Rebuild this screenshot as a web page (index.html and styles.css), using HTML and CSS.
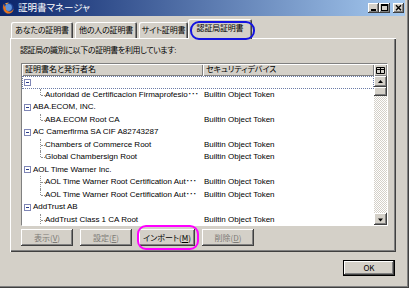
FILE: index.html
```html
<!DOCTYPE html>
<html lang="ja">
<head>
<meta charset="utf-8">
<title>証明書マネージャ</title>
<link rel="stylesheet" href="styles.css">
</head>
<body>
<div class="window">
  <div class="titlebar">
    <svg class="appicon" width="12" height="12" viewBox="0 0 16 16">
      <circle cx="8" cy="8" r="7.5" fill="#1d3f8f"/>
      <circle cx="8.6" cy="7.4" r="4.6" fill="#5d93db"/>
      <path d="M2.6 2.4C0.6 5.5 1 11.6 5.6 14.5C9.8 16.8 15.4 13.8 15.6 8.6C14.6 11.6 11.8 13.4 8.8 12.8C5.8 12.2 4.2 9.6 5.2 6.8C3.8 6.8 2.6 5 2.6 2.4Z" fill="#e8741a"/>
      <path d="M4.2 1.6C6 0.8 8 0.6 9.6 1.2C7.8 1.6 6.6 2.6 6 3.8C5.2 3 4.6 2.4 4.2 1.6Z" fill="#f4a23a"/>
    </svg>
    <span class="title">証明書マネージャ</span>
    <div class="controls">
      <span class="cbtn"><svg width="11" height="10" viewBox="0 0 11 10"><rect x="3" y="6" width="5" height="2" fill="#000"/></svg></span>
      <span class="cbtn"><svg width="11" height="10" viewBox="0 0 11 10"><path d="M2 1h7v7H2z M3 3v4h5V3z" fill="#000" fill-rule="evenodd"/></svg></span>
      <span class="cbtn close"><svg width="11" height="10" viewBox="0 0 11 10"><path d="M3 2.2l5 5M8 2.2l-5 5" stroke="#000" stroke-width="1.4"/></svg></span>
    </div>
  </div>

  <div class="content">
    <div class="tabs">
      <div class="tab t1">あなたの証明書</div>
      <div class="tab t2">他の人の証明書</div>
      <div class="tab t3">サイト証明書</div>
      <div class="tab t4 selected">認証局証明書</div>
    </div>

    <div class="panel">
      <div class="label">認証局の識別に以下の証明書を利用しています:</div>
      <div class="tree">
        <div class="tree-main">
          <div class="thead">
            <div class="th c1">証明書名と発行者名</div>
            <div class="th c2">セキュリティデバイス</div>
          </div>
          <div class="rows">
            <div class="row group focus"><div class="cell1"><span class="twisty"></span><span class="name"></span></div></div>
            <div class="row child last"><div class="cell1"><span class="branch"></span><span class="name">Autoridad de Certificacion Firmaprofesio<span class="ell">･･･</span></span></div><div class="cell2">Builtin Object Token</div></div>
            <div class="row group"><div class="cell1"><span class="twisty"></span><span class="name">ABA.ECOM, INC.</span></div></div>
            <div class="row child last"><div class="cell1"><span class="branch"></span><span class="name">ABA.ECOM Root CA</span></div><div class="cell2">Builtin Object Token</div></div>
            <div class="row group"><div class="cell1"><span class="twisty"></span><span class="name">AC Camerfirma SA CIF A82743287</span></div></div>
            <div class="row child"><div class="cell1"><span class="branch"></span><span class="name">Chambers of Commerce Root</span></div><div class="cell2">Builtin Object Token</div></div>
            <div class="row child last"><div class="cell1"><span class="branch"></span><span class="name">Global Chambersign Root</span></div><div class="cell2">Builtin Object Token</div></div>
            <div class="row group"><div class="cell1"><span class="twisty"></span><span class="name">AOL Time Warner Inc.</span></div></div>
            <div class="row child"><div class="cell1"><span class="branch"></span><span class="name">AOL Time Warner Root Certification Aut<span class="ell">･･･</span></span></div><div class="cell2">Builtin Object Token</div></div>
            <div class="row child last"><div class="cell1"><span class="branch"></span><span class="name">AOL Time Warner Root Certification Aut<span class="ell">･･･</span></span></div><div class="cell2">Builtin Object Token</div></div>
            <div class="row group"><div class="cell1"><span class="twisty"></span><span class="name">AddTrust AB</span></div></div>
            <div class="row child"><div class="cell1"><span class="branch"></span><span class="name">AddTrust Class 1 CA Root</span></div><div class="cell2">Builtin Object Token</div></div>
            <div class="row child"><div class="cell1"><span class="branch"></span><span class="name">AddTrust External CA Root</span></div><div class="cell2">Builtin Object Token</div></div>
          </div>
        </div>
        <div class="vscroll">
          <div class="picker"><svg width="9" height="7" viewBox="0 0 9 7"><path d="M0.5 0.5h8v6h-8z M0.5 2.5h8 M4.5 0.5v6" fill="none" stroke="#000" stroke-width="1"/></svg></div>
          <div class="sbtn"><svg width="11" height="9" viewBox="0 0 11 9"><path d="M3 6h5L5.5 3z" fill="#000"/></svg></div>
          <div class="thumb"></div>
          <div class="track"></div>
          <div class="sbtn down"><svg width="11" height="9" viewBox="0 0 11 9"><path d="M3 3.5h5L5.5 6.5z" fill="#000"/></svg></div>
        </div>
      </div>
      <div class="buttons">
        <div class="btn disabled"><span class="btxt">表示(<u>V</u>)</span></div>
        <div class="btn disabled"><span class="btxt">設定(<u>E</u>)</span></div>
        <div class="btn import"><span class="btxt">インポート(<u>M</u>)</span></div>
        <div class="btn disabled"><span class="btxt">削除(<u>D</u>)</span></div>
      </div>
    </div>

    <div class="footer">
      <div class="btn ok"><span class="btxt">OK</span></div>
    </div>
  </div>

  <div class="mark mark-tab"></div>
  <div class="mark mark-import"></div>
</div>
</body>
</html>
```

FILE: styles.css
```css
* {
  box-sizing: border-box;
  margin: 0;
  padding: 0;
}

html, body {
  width: 409px;
  height: 288px;
  overflow: hidden;
}

body {
  background: #d4d0c8;
  font-family: "Liberation Sans", "Noto Sans CJK JP", sans-serif;
  font-size: 8px;
  font-feature-settings: "palt";
  color: #000;
}

.window {
  position: relative;
  width: 409px;
  height: 288px;
  background: #d4d0c8;
  box-shadow: inset -1px -1px #404040, inset -2px -2px #808080;
}

/* title bar */
.titlebar {
  display: flex;
  align-items: center;
  height: 16px;
  margin-right: 4px;
  padding: 0 1px 0 2px;
  background: linear-gradient(to right, #0a246a, #a6caf0);
}

.appicon {
  flex: none;
}

.title {
  margin-left: 4px;
  color: #fff;
  font-size: 9.5px;
  line-height: 16px;
}

.controls {
  display: flex;
  margin-left: auto;
}

.cbtn {
  display: flex;
  width: 11px;
  height: 10px;
  background: #d4d0c8;
  box-shadow: inset -1px -1px #404040, inset 1px 1px #fff, inset -2px -2px #808080;
}

.cbtn.close {
  margin-left: 3px;
}

/* content */
.content {
  padding: 3px 13px 0 10px;
}

.tabs {
  position: relative;
  z-index: 1;
  display: flex;
  align-items: flex-end;
  height: 19px;
  padding-left: 1px;
}

.tab {
  height: 16px;
  margin-right: 2px;
  padding-top: 3px;
  line-height: 12px;
  text-align: center;
  white-space: nowrap;
  letter-spacing: -0.2px;
  background: #d4d0c8;
  border-radius: 2px 2px 0 0;
  box-shadow: inset 1px 1px #fff, inset -1px 0 #404040, inset -2px 0 #808080;
}

.t1 { width: 62px; }
.t2 { width: 62px; }
.t3 { width: 49px; }
.t4 { width: 60px; }

.tab.selected {
  width: 64px;
  height: 20px;
  margin: 0 -2px -1px -2px;
  padding-top: 4px;
}

.panel {
  height: 214px;
  padding: 8px 8px 0 11px;
  box-shadow: inset 1px 1px #fff, inset -1px -1px #404040, inset -2px -2px #808080;
}

.label {
  margin-left: -1px;
  line-height: 10px;
  white-space: nowrap;
  letter-spacing: -0.4px;
}

/* tree */
.tree {
  display: flex;
  height: 163px;
  margin-top: 7px;
  background: #fff;
  border: 1px solid;
  border-color: #808080 #fff #fff #808080;
  overflow: hidden;
}

.tree-main {
  flex: 1;
  min-width: 0;
  display: flex;
  flex-direction: column;
}

.thead {
  display: flex;
  height: 12px;
  flex: none;
}

.th {
  padding-left: 3px;
  line-height: 12px;
  white-space: nowrap;
  background: #d4d0c8;
  box-shadow: inset 1px 1px #fff, inset -1px -1px #808080;
}

.th.c1 {
  width: 181px;
}

.th.c2 {
  flex: 1;
}

.rows {
  flex: 1;
  overflow: hidden;
}

.row {
  display: flex;
  height: 12.5px;
  line-height: 12.5px;
  white-space: nowrap;
}

.row.focus {
  outline: 1px dotted #6b7ca8;
  outline-offset: -1px;
}

.cell1 {
  display: flex;
  align-items: center;
  width: 181px;
  flex: none;
  overflow: hidden;
}

.group .cell1 {
  padding-left: 2px;
}

.child .cell1 {
  padding-left: 18px;
}

.cell2 {
  padding-left: 1px;
}

.twisty {
  position: relative;
  flex: none;
  width: 7px;
  height: 7px;
  margin-right: 2px;
  background: #fff;
  border: 1px solid #7f86b6;
}

.twisty::after {
  content: "";
  position: absolute;
  left: 1px;
  top: 2px;
  width: 3px;
  height: 1px;
  background: #283a8a;
}

.branch {
  position: relative;
  flex: none;
  align-self: stretch;
  width: 5px;
}

.branch::before {
  content: "";
  position: absolute;
  left: 0;
  top: 0;
  height: 100%;
  border-left: 1px dotted #909090;
}

.last .branch::before {
  height: 50%;
}

.branch::after {
  content: "";
  position: absolute;
  left: 1px;
  top: 50%;
  width: 4px;
  border-top: 1px dotted #909090;
}

.ell {
  letter-spacing: -0.5px;
}

/* scrollbar */
.vscroll {
  display: flex;
  flex-direction: column;
  width: 13px;
  flex: none;
}

.picker {
  display: flex;
  align-items: center;
  justify-content: center;
  height: 12px;
  background: #d4d0c8;
  box-shadow: inset 1px 1px #fff, inset -1px -1px #808080;
}

.sbtn {
  display: flex;
  align-items: center;
  justify-content: center;
  height: 11px;
  background: #d4d0c8;
  box-shadow: inset -1px -1px #404040, inset 1px 1px #fff, inset -2px -2px #808080;
}

.sbtn.down {
  height: 12px;
}

.thumb {
  height: 9px;
  background: #d4d0c8;
  box-shadow: inset -1px -1px #404040, inset 1px 1px #fff, inset -2px -2px #808080;
}

.track {
  flex: 1;
  background: repeating-conic-gradient(#fff 0 25%, #d4d0c8 0 50%) 0 0 / 2px 2px;
}

/* buttons */
.buttons {
  display: flex;
  gap: 7px;
  margin-top: 3px;
}

.btn {
  display: flex;
  align-items: center;
  justify-content: center;
  width: 52px;
  height: 17px;
  white-space: nowrap;
  color: #000;
  background: #d4d0c8;
  box-shadow: inset -1px -1px #404040, inset 1px 1px #fff, inset -2px -2px #808080;
}

.btxt {
  font-family: "Noto Sans CJK JP", sans-serif;
  line-height: 10px;
}

.btn.import {
  width: 56px;
}

.btn.disabled {
  color: #7c7a76;
}

.footer {
  display: flex;
  justify-content: flex-end;
  margin-top: 8px;
  padding-right: 1px;
}

.btn.ok {
  height: 16px;
  box-shadow: inset 0 0 0 1px #000, inset -2px -2px #404040, inset 2px 2px #fff, inset -3px -3px #808080;
}

/* annotation marks */
.mark {
  position: absolute;
  z-index: 5;
  border-radius: 9px;
  pointer-events: none;
}

.mark-tab {
  left: 190px;
  top: 21px;
  width: 65px;
  height: 19px;
  border: 2px solid #1414e0;
}

.mark-import {
  left: 137px;
  top: 225px;
  width: 62px;
  height: 25px;
  border: 2px solid #ff00ff;
}
```
